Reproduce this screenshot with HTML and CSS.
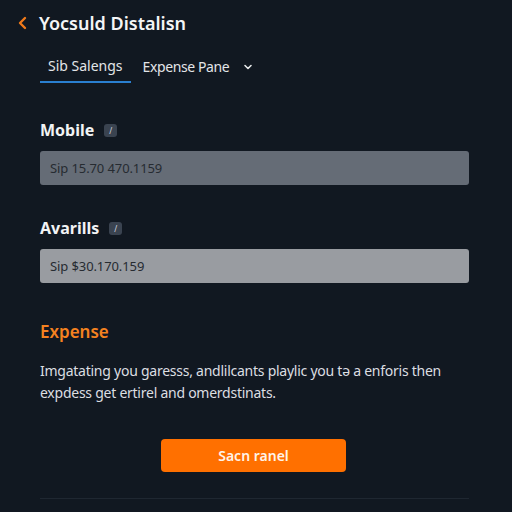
FILE: index.html
```html
<!DOCTYPE html>
<html lang="en">
<head>
  <meta charset="UTF-8" />
  <meta name="viewport" content="width=device-width, initial-scale=1.0"/>
  <title>Yocsuld Distalisn</title>
  <link rel="stylesheet" href="styles.css">
</head>
<body>
  <header class="top-bar">
    <svg class="back-icon" width="12" height="14" viewBox="0 0 12 14">
      <path d="M8 2 L3 7 L8 12" fill="none" stroke="#f07a1a" stroke-width="2.4" stroke-linecap="round" stroke-linejoin="round"/>
    </svg>
    <h1>Yocsuld Distalisn</h1>
  </header>

  <nav class="tabs">
    <div class="tab active">Sib Salengs</div>
    <div class="tab">Expense Pane
      <svg class="tab-caret" width="10" height="8" viewBox="0 0 10 8">
        <path d="M2 2.5 L5 5.5 L8 2.5" fill="none" stroke="#e6e8ea" stroke-width="1.6" stroke-linecap="round" stroke-linejoin="round"/>
      </svg>
    </div>
  </nav>

  <main class="content">
    <section class="field">
      <div class="field-label">Mobile <span class="edit-badge">/</span></div>
      <div class="field-input input-dark">Sip 15.70 470.1159</div>
    </section>

    <section class="field">
      <div class="field-label">Avarills <span class="edit-badge">/</span></div>
      <div class="field-input input-light">Sip $30.170.159</div>
    </section>

    <section class="expense">
      <h2>Expense</h2>
      <p>Imgatating you garesss, andlilcants playlic you t&#601; a enforis then expdess get ertirel and omerdstinats.</p>
    </section>

    <div class="actions">
      <button>Sacn ranel</button>
    </div>

    <hr class="divider">
  </main>
</body>
</html>
```

FILE: styles.css
```css
body {
  margin: 0;
  padding: 0;
  background-color: #111821;
  color: #f2f3f4;
  font-family: "Noto Sans", "Open Sans", sans-serif;
  width: 512px;
  height: 512px;
  overflow: hidden;
}

.top-bar {
  display: flex;
  align-items: center;
  gap: 10px;
  padding: 12px 0 0 17px;
  height: 22px;
}

.back-icon {
  display: block;
}

h1 {
  margin: 0;
  font-size: 18px;
  font-weight: 600;
  color: #f4f5f6;
}

.tabs {
  display: flex;
  align-items: center;
  gap: 12px;
  margin: 22px 0 0 40px;
}

.tab {
  font-size: 14px;
  color: #e3e5e8;
  padding: 0 0 6px;
  display: flex;
  align-items: center;
  gap: 14px;
  letter-spacing: -0.4px;
}

.tab.active {
  padding: 0 8px 6px;
  border-bottom: 2px solid #2a7fd0;
  letter-spacing: 0;
}

.tab-caret {
  display: block;
}

.content {
  padding: 0 43px 0 40px;
}

.field {
  margin-top: 36px;
}

.field + .field {
  margin-top: 32px;
}

.field-label {
  display: flex;
  align-items: center;
  gap: 10px;
  font-size: 16px;
  font-weight: 700;
  height: 22px;
}

.edit-badge {
  display: inline-flex;
  align-items: center;
  justify-content: center;
  width: 13px;
  height: 13px;
  border-radius: 3px;
  background-color: #3a4350;
  color: #d7dbe0;
  font-size: 8px;
  font-weight: 400;
}

.field-input {
  margin-top: 10px;
  height: 34px;
  border-radius: 3px;
  padding: 0 10px;
  display: flex;
  align-items: center;
  font-size: 13px;
  letter-spacing: -0.1px;
  color: #262b31;
}

.input-dark {
  background-color: #656c76;
}

.input-light {
  background-color: #999ca1;
}

.expense {
  margin-top: 37px;
}

.expense h2 {
  margin: 0;
  font-size: 17px;
  font-weight: 600;
  color: #f58220;
}

.expense p {
  margin: 17px 0 0;
  font-size: 14px;
  letter-spacing: -0.25px;
  line-height: 22px;
  color: #dcdee1;
}

.actions {
  display: flex;
  justify-content: center;
  margin-top: 35px;
  padding-right: 2px;
}

button {
  width: 185px;
  height: 33px;
  border: none;
  border-radius: 4px;
  background-color: #ff7000;
  color: #fff3e8;
  font-family: "Noto Sans", "Open Sans", sans-serif;
  font-size: 14px;
  font-weight: 600;
}

.divider {
  margin: 26px 0 0;
  border: none;
  border-top: 1px solid #1f2731;
}
```
